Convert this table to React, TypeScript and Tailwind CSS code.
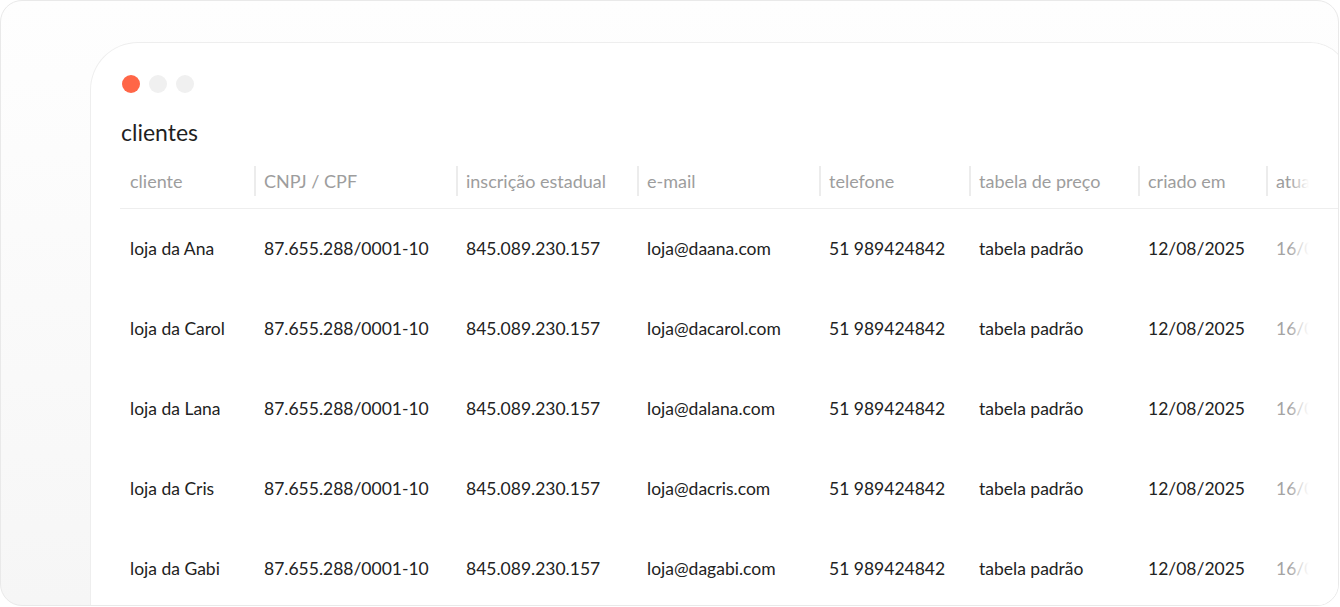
import React from "react";

const cols = [
  "cliente",
  "CNPJ / CPF",
  "inscrição estadual",
  "e-mail",
  "telefone",
  "tabela de preço",
  "criado em",
  "atualizado em",
];

const names = ["Ana", "Carol", "Lana", "Cris", "Gabi"];

const rows = names.map((n) => [
  `loja da ${n}`,
  "87.655.288/0001-10",
  "845.089.230.157",
  `loja@da${n.toLowerCase()}.com`,
  "51 989424842",
  "tabela padrão",
  "12/08/2025",
  "16/08/2025",
]);

export default function App() {
  return (
    <div
      className="w-[1340px] h-[607px] bg-white overflow-hidden"
      style={{ fontFamily: "Lato, 'Noto Sans', sans-serif" }}
    >
      <div className="w-[1339px] h-[606px] rounded-[22px] border border-[#e9e9e9] overflow-hidden bg-gradient-to-b from-[#fefefe] to-[#f6f6f6] pl-[89px] pt-[41px]">
        <div className="relative w-[1260px] h-[600px] bg-white border-l border-t border-r border-[#eeeeee] rounded-tl-[48px] rounded-tr-[40px] pl-[29px] pt-[32px] overflow-hidden">
          <div className="flex gap-[9px] pl-[2px]">
            <div className="w-[18px] h-[18px] rounded-full bg-[#ff6647]" />
            <div className="w-[18px] h-[18px] rounded-full bg-[#f0f0f0]" />
            <div className="w-[18px] h-[18px] rounded-full bg-[#f0f0f0]" />
          </div>
          <div className="mt-[25px] text-[23px] leading-[28px] text-[#1f1f1f] pl-[1px]">clientes</div>
          <div className="mt-[13px] grid grid-cols-[134px_202px_181px_182px_150px_169px_128px_1fr]">
            {cols.map((c, i) => (
              <div key={c} className="h-[50px] flex items-center pb-[5px] border-b border-[#eeeeee] text-[18px] text-[#9d9d9d] whitespace-nowrap overflow-hidden">
                {i === 0 ? (
                  <div className="pl-[10px]">{c}</div>
                ) : (
                  <div className="h-[30px] border-l-2 border-[#ececec] flex items-center pl-[8px]">{c}</div>
                )}
              </div>
            ))}
            {rows.map((r, ri) =>
              r.map((v, i) => (
                <div
                  key={`${ri}-${i}`}
                  className={`h-[80px] flex items-center pl-[10px] text-[17.5px] whitespace-nowrap overflow-hidden ${
                    i === 7 ? "text-[#a3a3a3]" : "text-[#222222]"
                  }`}
                >
                  {v}
                </div>
              ))
            )}
          </div>
          <div className="absolute top-0 bottom-0 left-[1198px] w-[20px] bg-gradient-to-r from-white/0 to-white" />
          <div className="absolute top-0 bottom-0 left-[1218px] right-0 bg-white" />
          <div className="absolute left-[1170px] right-0 top-[165px] h-px bg-[#eeeeee]" />
        </div>
      </div>
    </div>
  );
}
